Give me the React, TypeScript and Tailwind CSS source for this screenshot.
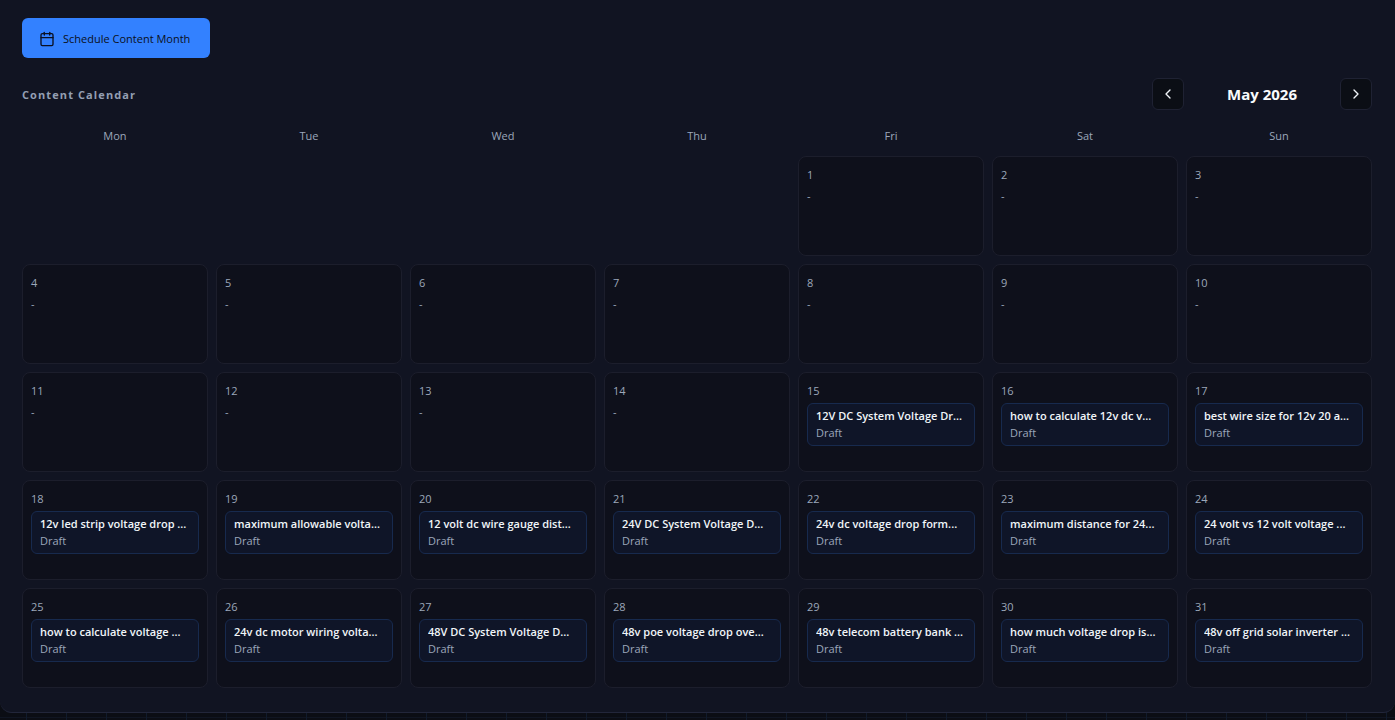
import { Calendar, ChevronLeft, ChevronRight } from "lucide-react";

const weekdays = ["Mon", "Tue", "Wed", "Thu", "Fri", "Sat", "Sun"];

const leadingBlanks = 4;
const daysInMonth = 31;

const drafts: Record<number, string> = {
  15: "12V DC System Voltage Dr...",
  16: "how to calculate 12v dc v...",
  17: "best wire size for 12v 20 a...",
  18: "12v led strip voltage drop ...",
  19: "maximum allowable volta...",
  20: "12 volt dc wire gauge dist...",
  21: "24V DC System Voltage D...",
  22: "24v dc voltage drop form...",
  23: "maximum distance for 24...",
  24: "24 volt vs 12 volt voltage ...",
  25: "how to calculate voltage ...",
  26: "24v dc motor wiring volta...",
  27: "48V DC System Voltage D...",
  28: "48v poe voltage drop ove...",
  29: "48v telecom battery bank ...",
  30: "how much voltage drop is...",
  31: "48v off grid solar inverter ...",
};

function DayCell({ day }: { day: number }) {
  const title = drafts[day];

  return (
    <div className="min-h-[100px] min-w-0 rounded-lg border border-[#1c1e2c] bg-[#0e101b] px-2 pt-2.5 text-[11px] leading-4 text-[#9ca7ba]">
      <div>{day}</div>
      {title ? (
        <div className="mt-1 rounded-md border border-[#172a4e] bg-[#0f1528] px-2 py-1">
          <div className="overflow-hidden font-semibold whitespace-nowrap text-[#f1f5f9]">{title}</div>
          <div className="leading-[17px]">Draft</div>
        </div>
      ) : (
        <div className="mt-[5px]">-</div>
      )}
    </div>
  );
}

export default function App() {
  const days = Array.from({ length: daysInMonth }, (_, i) => i + 1);

  return (
    <div className="min-h-screen bg-[#0b0d14] bg-[linear-gradient(to_right,#101a2b_1px,transparent_1px),linear-gradient(to_bottom,#101522_1px,transparent_1px)] bg-[size:40px_40px] bg-position-[26px_37px] font-['Open_Sans','Noto_Sans',sans-serif]">
      <main className="rounded-b-xl border-b border-[#22263a] bg-[#111422] pt-[18px] pr-[23px] pb-6 pl-[22px]">
        <button
          type="button"
          className="flex h-10 w-47 items-center gap-2 rounded-md bg-[#3381ff] px-[17px] pt-0.5 text-[11px] whitespace-nowrap text-[#0b1020]"
        >
          <Calendar className="size-4" />
          Schedule Content Month
        </button>

        <div className="mt-5 flex items-center justify-between">
          <h2 className="pt-0.5 text-[11px] font-bold tracking-widest text-[#949fb2]">Content Calendar</h2>
          <div className="flex items-center">
            <button
              type="button"
              aria-label="Previous month"
              className="flex size-8 items-center justify-center rounded-md border border-[#1f2233] bg-[#0b0e15] text-[#f1f5f9]"
            >
              <ChevronLeft className="size-4" />
            </button>
            <div className="w-[156px] text-center text-[15px] font-bold text-[#f8fafc]">May 2026</div>
            <button
              type="button"
              aria-label="Next month"
              className="flex size-8 items-center justify-center rounded-md border border-[#1f2233] bg-[#0b0e15] text-[#f1f5f9]"
            >
              <ChevronRight className="size-4" />
            </button>
          </div>
        </div>

        <div className="mt-4 grid grid-cols-7 gap-2 text-center text-[11px] leading-5 text-[#9ca7ba]">
          {weekdays.map((name) => (
            <div key={name}>{name}</div>
          ))}
        </div>

        <div className="mt-2.5 grid grid-cols-7 gap-2">
          {Array.from({ length: leadingBlanks }, (_, i) => (
            <div key={`blank-${i}`} />
          ))}
          {days.map((day) => (
            <DayCell key={day} day={day} />
          ))}
        </div>
      </main>
    </div>
  );
}
